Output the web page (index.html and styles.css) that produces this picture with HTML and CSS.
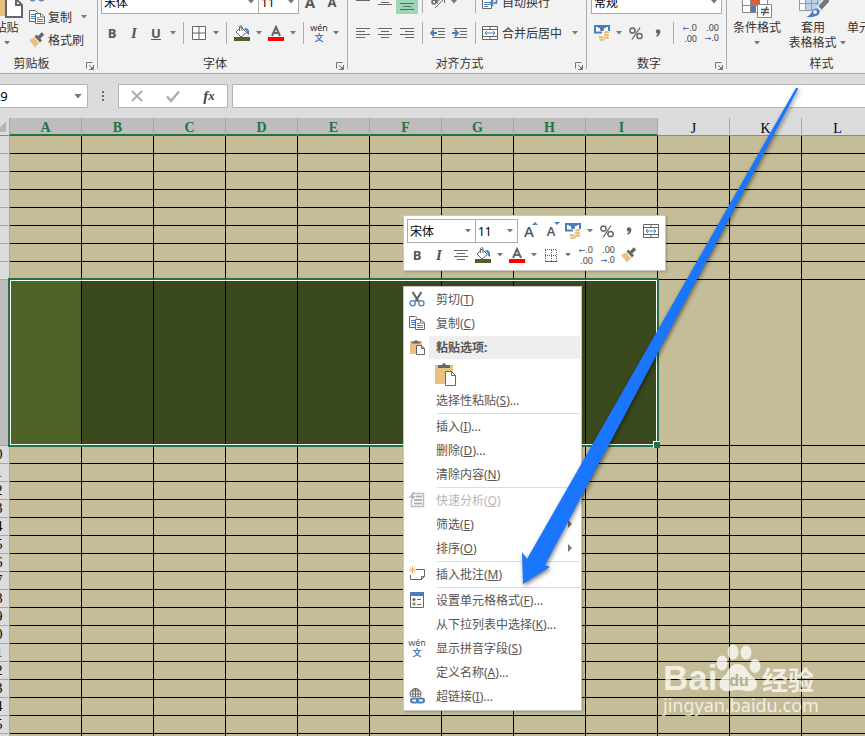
FILE: index.html
```html
<!DOCTYPE html>
<html lang="zh-CN">
<head>
    <meta charset="UTF-8">
    <meta name="viewport" content="width=device-width, initial-scale=1.0">
    <title>工作表</title>
    <link rel="stylesheet" href="styles.css">
</head>
<body>
    <svg class="symbols" aria-hidden="true">
        <symbol id="arrow" viewBox="0 0 6 4"><path d="M0 0h6L3 3.5z" fill="#777"/></symbol>
        <symbol id="cut" viewBox="0 0 16 16">
            <path d="M3.6 1l6 9.5M12.4 1l-6 9.5" stroke="#666" stroke-width="2.2" fill="none"/>
            <circle cx="3.6" cy="12.2" r="2.6" fill="none" stroke="#4a7ebb" stroke-width="1.3"/>
            <circle cx="12.4" cy="12.2" r="2.6" fill="none" stroke="#4a7ebb" stroke-width="1.3"/>
        </symbol>
        <symbol id="copy" viewBox="0 0 16 16">
            <path d="M.5 1.5h6l2 2v9h-8z" fill="#fff" stroke="#666"/>
            <path d="M2 5.5h4M2 7.5h4M2 9.5h4" stroke="#4a7ebb"/>
            <path d="M6.500 4.500h5.500l3.500 3.500v6.500h-9z" fill="#fff" stroke="#666"/>
            <path d="M11.500 4.500v3.500h4" fill="none" stroke="#666"/>
            <path d="M8 8.500h2.500M8 10.500h6M8 12.500h6" stroke="#4a7ebb"/>
        </symbol>
        <symbol id="brush" viewBox="0 0 16 16">
            <path d="M0 8l5-2.500 5 5.500-4 4.500z" fill="#e9c080"/>
            <path d="M5.500 4.500l2-2 5.500 6-2 2z" fill="#666"/>
            <path d="M10 5.500l4-4" stroke="#666" stroke-width="3.400"/>
        </symbol>
        <symbol id="paste" viewBox="0 0 16 16">
            <path d="M1 2h12v13H1z" fill="#e9c080"/>
            <path d="M3 4.500V2.500h2.500Q7-.5 8.500 2.500H11v2z" fill="#666"/>
            <path d="M7.500 6.500h5l3 3v6h-8z" fill="#fff" stroke="#666"/>
            <path d="M12.500 6.500v3h3" fill="none" stroke="#666"/>
        </symbol>
        <symbol id="clip" viewBox="0 0 24 24">
            <path d="M1 3h18v19H1z" fill="#e9c080"/>
            <path d="M4 6V3h4q2-4 4 0h4v3z" fill="#666"/>
            <path d="M11.500 9.500h6l4 4v10h-10z" fill="#fff" stroke="#666"/>
            <path d="M17.500 9.500v4h4" fill="none" stroke="#666"/>
        </symbol>
        <symbol id="borders" viewBox="0 0 16 16">
            <path d="M1.500 1.500h13v13h-13zM8 1.500v13M1.500 8h13" fill="#fff" stroke="#666"/>
        </symbol>
        <symbol id="dotted" viewBox="0 0 16 16">
            <path d="M2 2.500h12M2 8.500h12M2.500 3v11M8.500 3v11M13.500 3v11" fill="none" stroke="#666" stroke-dasharray="1 1"/>
            <path d="M2 14.500h12" stroke="#666"/>
        </symbol>
        <symbol id="bucket" viewBox="0 0 16 16">
            <path d="M11 3q5 0 4 7l-2-1.500q0-4-3-4z" fill="#4a7ebb"/>
            <path d="M7 2l5.500 5.500L7 12 2 7z" fill="#fff" stroke="#666"/>
            <path d="M5.500 6V1.500q1.500-2 2.500 0V6" fill="none" stroke="#666"/>
            <path d="M0 12h16v4H0z" fill="#4f6228"/>
        </symbol>
        <symbol id="fontcolor" viewBox="0 0 16 16">
            <path d="M4 11L8 2l4 9M5.500 8h5" fill="none" stroke="#666" stroke-width="2"/>
            <path d="M0 12h16v4H0z" fill="#f00"/>
        </symbol>
        <symbol id="left" viewBox="0 0 16 16"><path d="M1 3.500h14M1 6.500h9M1 9.500h14M1 12.500h9" stroke="#666"/></symbol>
        <symbol id="center" viewBox="0 0 16 16"><path d="M1 3.500h14M4 6.500h8M1 9.500h14M4 12.500h8" stroke="#666"/></symbol>
        <symbol id="right" viewBox="0 0 16 16"><path d="M1 3.500h14M6 6.500h9M1 9.500h14M6 12.500h9" stroke="#666"/></symbol>
        <symbol id="top" viewBox="0 0 16 16"><path d="M1 .5h14M4 3.500h8M1 6.500h14" stroke="#666"/></symbol>
        <symbol id="middle" viewBox="0 0 16 16"><path d="M1 5.500h14M4 8.500h8M1 10.500h14" stroke="#666"/></symbol>
        <symbol id="bottom" viewBox="0 0 16 16"><path d="M1 9.500h14M4 12.500h8M1 15.500h14" stroke="#666"/></symbol>
        <symbol id="outdent" viewBox="0 0 16 16">
            <path d="M2 3.500h13M8 6.500h7M8 9.500h7M2 12.500h13" stroke="#666"/>
            <path d="M7 8H1M4 5L1 8l3 3" fill="none" stroke="#4a7ebb" stroke-width="1.800"/>
        </symbol>
        <symbol id="indent" viewBox="0 0 16 16">
            <path d="M2 3.500h13M8 6.500h7M8 9.500h7M2 12.500h13" stroke="#666"/>
            <path d="M0 8h6M3 5l3 3-3 3" fill="none" stroke="#4a7ebb" stroke-width="1.800"/>
        </symbol>
        <symbol id="orient" viewBox="0 0 16 16">
            <path d="M5 14L14 5M10 4.500h4.500V9" fill="none" stroke="#666"/>
            <circle cx="4" cy="8" r="2" fill="none" stroke="#666" stroke-width="1.500"/>
            <circle cx="8" cy="4" r="2" fill="none" stroke="#666" stroke-width="1.500"/>
            <path d="M5 5l3 4M8 1l2 4" stroke="#666" stroke-width="1.500"/>
        </symbol>
        <symbol id="wrap" viewBox="0 0 16 16">
            <path d="M.5 3.500h9v11h-9z" fill="#fff" stroke="#666"/>
            <path d="M2 8.500h6M2 10.500h6M2 12.500h4" stroke="#4a7ebb"/>
            <path d="M14.500 3v6H8.500M11 6L8.500 9l2.500 3" fill="none" stroke="#4a7ebb" stroke-width="1.600"/>
        </symbol>
        <symbol id="merge" viewBox="0 0 16 16">
            <path d="M.5 1.500h15v13H.5zM.5 4.500h15M.5 11.500h15M8 1.500v3M8 11.500v3" fill="#fff" stroke="#666"/>
            <path d="M3 8h10M5 6L3 8l2 2M11 6l2 2-2 2" fill="none" stroke="#4a7ebb"/>
        </symbol>
        <symbol id="money" viewBox="0 0 16 16">
            <path d="M0 0h16v8.500H0z" fill="#4a7ebb"/>
            <path d="M2 2h2v1h8V2h2v4.500H2z" fill="#fff"/>
            <circle cx="8" cy="4" r="2.200" fill="#4a7ebb"/>
            <path d="M8 6h8v10H3v-4h5z" fill="#fff"/>
            <ellipse cx="12.500" cy="7.200" rx="3" ry="1.200" fill="#e9c080"/>
            <ellipse cx="12.500" cy="10" rx="3" ry="1.200" fill="#e9c080"/>
            <ellipse cx="12.500" cy="12.800" rx="3" ry="1.200" fill="#e9c080"/>
            <ellipse cx="7" cy="12.200" rx="3" ry="1.200" fill="#e9c080"/>
            <ellipse cx="8" cy="14.800" rx="3" ry="1.200" fill="#e9c080"/>
        </symbol>
        <symbol id="percent" viewBox="0 0 16 16">
            <circle cx="4.500" cy="5.500" r="2.600" fill="none" stroke="#666" stroke-width="1.500"/>
            <circle cx="11.500" cy="11" r="2.600" fill="none" stroke="#666" stroke-width="1.500"/>
            <path d="M12 2.500l-8 12" stroke="#666" stroke-width="1.300"/>
        </symbol>
        <symbol id="comma" viewBox="0 0 16 16">
            <circle cx="8" cy="6.500" r="2.200" fill="#666"/>
            <path d="M9.500 6q.3 3.500-3 5" fill="none" stroke="#666" stroke-width="1.600"/>
        </symbol>
        <symbol id="launcher" viewBox="0 0 8 8">
            <path d="M.5 6.500v-6h6M3 3l3.500 3.500M7.500 3v4.500H3" fill="none" stroke="#777"/>
            <path d="M7.500 4v3.500H4z" fill="#777"/>
        </symbol>
        <symbol id="analyse" viewBox="0 0 16 16">
            <path d="M5.500 1.500h9v13h-12V9" fill="#fff" stroke="#bbb" stroke-width="1.500"/>
            <path d="M4 0L0 6h3L1 10l6-6H4l2-4z" fill="#b5b5b5"/>
            <path d="M7 4.500h6M5 8h8M5 11.500h8" stroke="#b0b0b0" stroke-width="2"/>
        </symbol>
        <symbol id="comment" viewBox="0 0 16 16">
            <path d="M7 3.500h8.500v7l-3 3H1.500V9" fill="#fff" stroke="#666"/>
            <path d="M15.500 10.500h-3v3" fill="none" stroke="#666"/>
            <path d="M3.500 0v8M0 4h7M1 1.500l5 5M6 1.500l-5 5" stroke="#e9b866"/>
        </symbol>
        <symbol id="format" viewBox="0 0 16 16">
            <path d="M1.500 1.500h13v14h-13z" fill="#fff" stroke="#666"/>
            <path d="M1 0h14v4H1z" fill="#4a7ebb"/>
            <path d="M8 7.500h4M8 12.500h4" stroke="#666"/>
            <circle cx="5" cy="7.500" r="1.500" fill="#666"/>
            <circle cx="5" cy="12" r="1.200" fill="none" stroke="#666"/>
        </symbol>
        <symbol id="link" viewBox="0 0 16 16">
            <circle cx="6.500" cy="6" r="5.500" fill="#fff" stroke="#666"/>
            <path d="M6.500.5v10M1 6h11M2 3h9M2 9h9" stroke="#666"/>
            <ellipse cx="6.500" cy="6" rx="2.800" ry="5.500" fill="none" stroke="#666"/>
            <path d="M1 9h15v7H1z" fill="#fff"/>
            <rect x="2" y="10.500" width="7" height="4" rx="2" fill="none" stroke="#4a7ebb" stroke-width="2"/>
            <rect x="8" y="10.500" width="7" height="4" rx="2" fill="none" stroke="#4a7ebb" stroke-width="2"/>
        </symbol>
        <symbol id="cross" viewBox="0 0 16 16"><path d="M3 3l10 10M13 3L3 13" stroke="#aaa" stroke-width="1.800"/></symbol>
        <symbol id="check" viewBox="0 0 16 16"><path d="M2 8.500l4 4.500 8-9.500" fill="none" stroke="#aaa" stroke-width="2.400"/></symbol>
        <symbol id="more" viewBox="0 0 2 12"><path d="M0 0h2v2H0zM0 4h2v2H0zM0 8h2v2H0z" fill="#666"/></symbol>
        <symbol id="condition" viewBox="0 0 32 32">
            <path d="M1.500 5.500h25v21h-25zM1.500 12.500h25M1.500 19.500h25M9.500 5.500v21M17.500 5.500v21" fill="#fff" stroke="#888"/>
            <path d="M10 6h7v6h-7zM10 13h9v6h-9z" fill="#d9603b"/>
            <path d="M10 20h5v6h-5z" fill="#4a7ebb"/>
            <path d="M16.500 18.500h14v13h-14z" fill="#fff" stroke="#888"/>
            <path d="M20 23.500h8M20 26.500h8M26 20.500l-4 9" stroke="#555" stroke-width="1.300"/>
        </symbol>
        <symbol id="tablestyle" viewBox="0 0 32 32">
            <path d="M2.500 3.500h23v21h-23z" fill="#fff"/>
            <path d="M9 10h17v14H9z" fill="#bdd0ea"/>
            <path d="M2.500 3.500h23v21h-23zM2.500 10.500h23M2.500 17.500h23M8.500 3.500v21M14.500 3.500v21M20.500 3.500v21" fill="none" stroke="#999"/>
            <path d="M31 13l-9 10" stroke="#fff" stroke-width="7"/>
            <path d="M31 13l-8 9" stroke="#777" stroke-width="5"/>
            <path d="M9 31q5-2 6-6 3-4 7-1 2 4-3 6-5 2-10 1z" fill="#4a7ebb"/>
            <circle cx="18" cy="26" r="2" fill="#e4edf8"/>
        </symbol>
    </svg>

    <header class="ribbon">
        <section class="group clipboard">
            <div class="tools">
                <button class="big paste"><svg class="i32"><use href="#paste"/></svg><span>粘贴</span><svg class="down"><use href="#arrow"/></svg></button>
                <div class="stack">
                    <button class="line" aria-label="剪切"><svg class="i16"><use href="#cut"/></svg></button>
                    <button class="line"><svg class="i16"><use href="#copy"/></svg>复制<svg class="down"><use href="#arrow"/></svg></button>
                    <button class="line"><svg class="i16"><use href="#brush"/></svg>格式刷</button>
                </div>
            </div>
            <footer><span>剪贴板</span><button class="launch" aria-label="剪贴板选项"><svg><use href="#launcher"/></svg></button></footer>
        </section>

        <section class="group font">
            <div class="row">
                <select class="box face" aria-label="字体"><option>宋体</option></select>
                <select class="box size" aria-label="字号"><option>11</option></select>
                <button class="tool letter grow">A</button>
                <button class="tool letter">A</button>
            </div>
            <div class="row">
                <button class="tool letter">B</button>
                <button class="tool letter italic">I</button>
                <button class="tool letter under">U</button>
                <button class="drop" aria-label="下划线"><svg class="down"><use href="#arrow"/></svg></button>
                <i class="sep"></i>
                <button class="tool" aria-label="边框"><svg class="i16"><use href="#borders"/></svg></button>
                <button class="drop" aria-label="更多边框"><svg class="down"><use href="#arrow"/></svg></button>
                <i class="sep"></i>
                <button class="tool" aria-label="填充颜色"><svg class="i16"><use href="#bucket"/></svg></button>
                <button class="drop" aria-label="更多填充颜色"><svg class="down"><use href="#arrow"/></svg></button>
                <button class="tool" aria-label="字体颜色"><svg class="i16"><use href="#fontcolor"/></svg></button>
                <button class="drop" aria-label="更多字体颜色"><svg class="down"><use href="#arrow"/></svg></button>
                <i class="sep"></i>
                <button class="tool pinyin"><span>wén</span><b>文</b></button>
                <button class="drop" aria-label="更多拼音"><svg class="down"><use href="#arrow"/></svg></button>
            </div>
            <footer><span>字体</span><button class="launch" aria-label="字体选项"><svg><use href="#launcher"/></svg></button></footer>
        </section>

        <section class="group align">
            <div class="row">
                <button class="tool" aria-label="顶端对齐"><svg class="i16"><use href="#top"/></svg></button>
                <button class="tool" aria-label="垂直居中"><svg class="i16"><use href="#middle"/></svg></button>
                <button class="tool on" aria-label="底端对齐"><svg class="i16"><use href="#bottom"/></svg></button>
                <i class="sep"></i>
                <button class="tool" aria-label="方向"><svg class="i16"><use href="#orient"/></svg></button>
                <button class="drop wide" aria-label="更多方向"><svg class="down"><use href="#arrow"/></svg></button>
                <i class="sep"></i>
                <button class="line"><svg class="i16"><use href="#wrap"/></svg>自动换行</button>
            </div>
            <div class="row">
                <button class="tool" aria-label="左对齐"><svg class="i16"><use href="#left"/></svg></button>
                <button class="tool" aria-label="居中"><svg class="i16"><use href="#center"/></svg></button>
                <button class="tool" aria-label="右对齐"><svg class="i16"><use href="#right"/></svg></button>
                <i class="sep"></i>
                <button class="tool" aria-label="减少缩进"><svg class="i16"><use href="#outdent"/></svg></button>
                <button class="tool" aria-label="增加缩进"><svg class="i16"><use href="#indent"/></svg></button>
                <i class="sep"></i>
                <button class="line"><svg class="i16"><use href="#merge"/></svg>合并后居中<svg class="down"><use href="#arrow"/></svg></button>
            </div>
            <footer><span>对齐方式</span><button class="launch" aria-label="对齐选项"><svg><use href="#launcher"/></svg></button></footer>
        </section>

        <section class="group number">
            <div class="row">
                <select class="box kind" aria-label="数字格式"><option>常规</option></select>
            </div>
            <div class="row">
                <button class="tool" aria-label="会计数字格式"><svg class="i16"><use href="#money"/></svg></button>
                <button class="drop" aria-label="更多货币"><svg class="down"><use href="#arrow"/></svg></button>
                <button class="tool" aria-label="百分比"><svg class="i16"><use href="#percent"/></svg></button>
                <button class="tool" aria-label="千位分隔"><svg class="i16"><use href="#comma"/></svg></button>
                <i class="sep"></i>
                <button class="tool digits"><span><b>←</b>.0</span><span>.00</span></button>
                <button class="tool digits"><span>.00</span><span><b>→</b>.0</span></button>
            </div>
            <footer><span>数字</span><button class="launch" aria-label="数字选项"><svg><use href="#launcher"/></svg></button></footer>
        </section>

        <section class="group look">
            <div class="tools">
                <button class="big"><svg class="i32"><use href="#condition"/></svg><span>条件格式</span><svg class="down"><use href="#arrow"/></svg></button>
                <button class="big"><svg class="i32"><use href="#tablestyle"/></svg><span>套用</span><span class="more">表格格式<svg class="down"><use href="#arrow"/></svg></span></button>
                <button class="big"><svg class="i32"></svg><span>单元格样式</span></button>
            </div>
            <footer><span>样式</span></footer>
        </section>
    </header>

    <div class="formula">
        <div class="name">
            <input type="text" value="A9" aria-label="名称框">
            <svg class="down"><use href="#arrow"/></svg>
        </div>
        <svg class="dots"><use href="#more"/></svg>
        <div class="edit">
            <button aria-label="取消"><svg class="i16"><use href="#cross"/></svg></button>
            <button aria-label="输入"><svg class="i16"><use href="#check"/></svg></button>
            <button class="fx">f<small>x</small></button>
        </div>
        <input class="value" type="text" aria-label="编辑栏">
    </div>

    <main class="sheet">
        <table>
            <colgroup><col class="rowhead"></colgroup>
            <thead><tr id="head"></tr></thead>
            <tbody id="rows"></tbody>
        </table>
    </main>

    <div class="minibar">
        <div class="row">
            <select class="box face" aria-label="字体"><option>宋体</option></select>
            <select class="box size" aria-label="字号"><option>11</option></select>
            <button class="tool letter step up">A</button>
            <button class="tool letter step">A</button>
            <button class="tool" aria-label="会计数字格式"><svg class="i16"><use href="#money"/></svg></button>
            <button class="drop" aria-label="更多货币"><svg class="down"><use href="#arrow"/></svg></button>
            <button class="tool" aria-label="百分比"><svg class="i16"><use href="#percent"/></svg></button>
            <button class="tool" aria-label="千位分隔"><svg class="i16"><use href="#comma"/></svg></button>
            <button class="tool" aria-label="合并后居中"><svg class="i16"><use href="#merge"/></svg></button>
        </div>
        <div class="row">
            <button class="tool letter">B</button>
            <button class="tool letter italic">I</button>
            <button class="tool" aria-label="居中"><svg class="i16"><use href="#center"/></svg></button>
            <button class="tool" aria-label="填充颜色"><svg class="i16"><use href="#bucket"/></svg></button>
            <button class="drop" aria-label="更多填充颜色"><svg class="down"><use href="#arrow"/></svg></button>
            <button class="tool" aria-label="字体颜色"><svg class="i16"><use href="#fontcolor"/></svg></button>
            <button class="drop" aria-label="更多字体颜色"><svg class="down"><use href="#arrow"/></svg></button>
            <button class="tool" aria-label="边框"><svg class="i16"><use href="#dotted"/></svg></button>
            <button class="drop" aria-label="更多边框"><svg class="down"><use href="#arrow"/></svg></button>
            <button class="tool digits"><span><b>←</b>.0</span><span>.00</span></button>
            <button class="tool digits"><span>.00</span><span><b>→</b>.0</span></button>
            <button class="tool" aria-label="格式刷"><svg class="i16"><use href="#brush"/></svg></button>
        </div>
    </div>

    <nav class="menu">
        <button><svg class="i16"><use href="#cut"/></svg><span>剪切(<u>T</u>)</span></button>
        <button><svg class="i16"><use href="#copy"/></svg><span>复制(<u>C</u>)</span></button>
        <div class="title"><svg class="i16"><use href="#paste"/></svg><span>粘贴选项:</span></div>
        <button class="option" aria-label="粘贴"><svg class="i24"><use href="#clip"/></svg></button>
        <button><span>选择性粘贴(<u>S</u>)...</span></button>
        <hr>
        <button><span>插入(<u>I</u>)...</span></button>
        <button><span>删除(<u>D</u>)...</span></button>
        <button><span>清除内容(<u>N</u>)</span></button>
        <hr>
        <button disabled><svg class="i16"><use href="#analyse"/></svg><span>快速分析(<u>Q</u>)</span></button>
        <button class="sub"><span>筛选(<u>E</u>)</span></button>
        <button class="sub"><span>排序(<u>O</u>)</span></button>
        <hr>
        <button><svg class="i16"><use href="#comment"/></svg><span>插入批注(<u>M</u>)</span></button>
        <hr>
        <button><svg class="i16"><use href="#format"/></svg><span>设置单元格格式(<u>F</u>)...</span></button>
        <button><span>从下拉列表中选择(<u>K</u>)...</span></button>
        <button><span class="pinyin"><span>wén</span><b>文</b></span><span>显示拼音字段(<u>S</u>)</span></button>
        <button><span>定义名称(<u>A</u>)...</span></button>
        <button><svg class="i16"><use href="#link"/></svg><span>超链接(<u>I</u>)...</span></button>
    </nav>

    <div class="watermark">
        <div class="logo">
            <span class="bai">Bai</span>
            <span class="paw">
                <svg viewBox="0 0 46 50">
                    <ellipse cx="6" cy="20" rx="5.500" ry="7.500"/>
                    <ellipse cx="17" cy="9" rx="5.500" ry="7.500"/>
                    <ellipse cx="30" cy="9.500" rx="5.500" ry="7"/>
                    <ellipse cx="39" cy="23" rx="5.500" ry="7"/>
                    <path d="M22 21q6 0 9 6 3 5 7 8 5 5 2 10-3 4-10 3-8-2-16 0-8 1-10-4-2-6 3-10 4-3 6-8 3-5 9-5z"/>
                </svg>
                <b>du</b>
            </span>
            <span class="jy">经验</span>
        </div>
        <div class="site">jingyan.baidu.com</div>
    </div>

    <svg class="pointer" width="300" height="510" viewBox="0 0 300 510" aria-hidden="true">
        <path d="M275 8q2-1 2 1L24 485l5 2-27 17-1-32 5 7z"/>
    </svg>

    <script>
        var columns = 'ABCDEFGHIJKL'.split('');
        var selectedRow = 9;
        var lastSelected = columns.indexOf('I');

        var head = '<th class="corner"></th>';
        columns.forEach(function (name, i) {
            head += '<th scope="col"' + (i <= lastSelected ? ' class="picked"' : '') + '>' + name + '</th>';
        });
        document.getElementById('head').innerHTML = head;

        var html = '';
        for (var r = 1; r <= 26; r++) {
            html += r === selectedRow ? '<tr class="current">' : '<tr>';
            html += '<th scope="row">' + r + '</th>';
            columns.forEach(function (name, i) {
                var picked = r === selectedRow && i <= lastSelected;
                html += picked ? '<td class="picked">' : '<td>';
                if (r === selectedRow && i === 0) {
                    html += '<div class="selection"></div>';
                }
                html += '</td>';
            });
            html += '</tr>';
        }
        document.getElementById('rows').innerHTML = html;
    </script>
</body>
</html>
```
FILE: styles.css
```css
* {
    box-sizing: border-box;
}

body {
    position: relative;
    margin: 0;
    height: 100vh;
    overflow: hidden;
    background-color: #dcdcdc;
    color: #333;
    font-family: "Noto Sans", "Noto Sans CJK SC", sans-serif;
    font-size: 12px;
}

button {
    display: flex;
    align-items: center;
    justify-content: center;
    flex: none;
    padding: 0;
    border: none;
    background: none;
    color: inherit;
    font: inherit;
    white-space: nowrap;
}

svg {
    flex: none;
}

.symbols {
    display: none;
}

.i16 {
    width: 16px;
    height: 16px;
}

.i24 {
    width: 24px;
    height: 24px;
}

.i32 {
    width: 32px;
    height: 32px;
}

.down {
    width: 6px;
    height: 4px;
}

/* ribbon, scrolled partly out of view */
.ribbon {
    display: flex;
    height: 94px;
    margin-top: -20px;
    margin-left: -19px;
    background-color: #f2f2f2;
    border-bottom: 1px solid #ababab;
}

.group {
    position: relative;
    display: flex;
    flex-direction: column;
    flex: none;
    gap: 8px;
    padding: 10px 4px 0;
}

.group::after {
    content: "";
    position: absolute;
    top: 0;
    right: 0;
    bottom: 4px;
    border-right: 1px solid #ababab;
}

.clipboard {
    width: 117px;
}

.font {
    width: 250px;
}

.align {
    width: 239px;
}

.number {
    width: 140px;
}

.group.look {
    width: 189px;
    padding-left: 2px;
}

.row,
.tools {
    display: flex;
    align-items: center;
}

.row {
    height: 22px;
}

.row:first-child {
    height: 24px;
}

.font .row {
    margin-left: -1px;
}

.tools {
    align-items: flex-start;
    height: 54px;
}

.group footer {
    display: flex;
    position: absolute;
    left: 0;
    right: 0;
    bottom: 0;
    line-height: 18px;
}

.group footer span {
    flex: 1;
    text-align: center;
}

.launch {
    width: 16px;
    padding-top: 3px;
}

.launch svg {
    width: 8px;
    height: 8px;
}

.clipboard .tools {
    margin-top: -8px;
    height: 62px;
}

.clipboard .line {
    padding-left: 1px;
    gap: 3px;
}

.big {
    flex-direction: column;
    justify-content: flex-start;
    line-height: 15px;
    width: 56px;
}

.big .i32 {
    margin-bottom: 2px;
}

.big .down {
    margin-top: 6px;
}

.big.paste {
    width: 43px;
    margin-top: 4px;
}

.look .tools {
    margin-top: -4px;
}

.look .big:last-child {
    width: 72px;
}

.more {
    display: flex;
    gap: 3px;
    padding-left: 8px;
}

.line {
    gap: 4px;
    height: 23px;
    padding-left: 2px;
}

.line .down {
    margin-left: 6px;
}

.sep {
    width: 1px;
    height: 22px;
    margin: 0 4px;
    background-color: #ababab;
}

.tool {
    width: 22px;
    height: 22px;
}

.tool.on {
    height: 24px;
    background-color: #9fd5b7;
}

.drop {
    width: 12px;
    height: 22px;
}

.drop.wide {
    width: 22px;
    justify-content: flex-start;
    padding-left: 2px;
}

.letter {
    color: #555;
    font-family: "Open Sans", sans-serif;
    font-size: 13px;
    font-weight: bold;
}

.letter.grow {
    font-size: 15px;
}

.italic {
    font-family: "Liberation Serif", serif;
    font-size: 15px;
    font-style: italic;
}

.under {
    text-decoration: underline;
}

.box {
    flex: none;
    height: 24px;
    padding: 0 2px;
    border: 1px solid #ababab;
    border-radius: 0;
    appearance: none;
    background: #fff url("data:image/svg+xml,%3Csvg xmlns='http://www.w3.org/2000/svg' width='6' height='4'%3E%3Cpath d='M0 0h6L3 3.500z' fill='%23777'/%3E%3C/svg%3E") no-repeat right 4px center;
    color: #000;
    font: inherit;
}

.face {
    width: 158px;
}

.size {
    width: 41px;
    margin-left: -1px;
}

.kind {
    width: 131px;
}

.pinyin {
    display: flex;
    flex: none;
    flex-direction: column;
    align-items: center;
    justify-content: center;
    width: 16px;
    font-size: 9px;
    line-height: 10px;
}

.tool.pinyin {
    width: 22px;
}

.pinyin b {
    color: #4a7ebb;
}

.digits {
    flex-direction: column;
    align-items: flex-end;
    padding-right: 3px;
    font-size: 9px;
    line-height: 10px;
    color: #444;
}

.digits b {
    color: #4a7ebb;
    font-family: "DejaVu Sans", sans-serif;
    font-size: 8px;
}

/* formula bar */
.formula {
    display: flex;
    gap: 4px;
    padding: 10px 0;
    height: 44px;
}

.name {
    display: flex;
    align-items: center;
    width: 98px;
    height: 24px;
    margin-left: -10px;
    padding-right: 5px;
    background-color: #fff;
    border: 1px solid #b5b5b5;
}

.name input {
    flex: 1;
    min-width: 0;
    padding: 0 0 0 1px;
    border: none;
    color: #000;
    font: inherit;
    font-size: 13px;
}

.name .down {
    width: 8px;
    height: 5px;
}

.dots {
    width: 22px;
    height: 12px;
    margin-top: 7px;
}

.edit {
    display: flex;
    width: 110px;
    height: 24px;
    background-color: #fff;
    border: 1px solid #b5b5b5;
}

.edit button {
    flex: 1;
}

.edit .fx {
    color: #444;
    font-family: "Liberation Serif", serif;
    font-size: 15px;
    font-style: italic;
    font-weight: bold;
}

.fx small {
    font-size: 13px;
}

.value {
    flex: 1;
    min-width: 0;
    height: 24px;
    border: 1px solid #b5b5b5;
    border-right: none;
}

/* sheet */
.sheet {
    margin-left: -17px;
    background-color: #dcdcdc;
}

.sheet table {
    width: 891px;
    border-spacing: 0;
    table-layout: fixed;
}

.rowhead {
    width: 27px;
}

.sheet th {
    height: 18px;
    padding: 0;
    border-right: 1px solid #a6a6a6;
    border-bottom: 1px solid #a6a6a6;
    color: #000;
    font-family: "Liberation Serif", serif;
    font-size: 14px;
    font-weight: normal;
    line-height: 16px;
}

.sheet thead th {
    padding-top: 3px;
    border-bottom-color: #888;
    line-height: 13px;
}

.sheet thead .picked {
    background-color: #bdbdbd;
    border-bottom: 2px solid #217346;
    color: #217346;
    font-weight: bold;
}

.sheet .corner {
    background: linear-gradient(135deg, transparent 50%, #b5b5b5 50%) no-repeat right 3px bottom 3px / 10px 10px;
}

.sheet tbody th {
    padding-right: 1px;
}

.sheet td {
    height: 18px;
    padding: 0;
    background-color: #c4bd97;
    border-right: 1px solid #000;
    border-bottom: 1px solid #000;
}

.current th {
    background-color: #bdbdbd;
}

.sheet .current td {
    height: 166px;
}

.sheet .current .picked {
    position: relative;
    background-color: #3b4a1e;
}

.sheet .current .picked:nth-child(2) {
    z-index: 1;
    background-color: #4f6228;
}

.selection {
    position: absolute;
    top: -2px;
    left: -2px;
    width: 651px;
    height: 169px;
    border: 2px solid #217346;
    outline: 1px solid #fff;
    outline-offset: -3px;
}

.selection::after {
    content: "";
    position: absolute;
    right: -3px;
    bottom: -3px;
    width: 6px;
    height: 6px;
    background-color: #217346;
    border-top: 1px solid #fff;
    border-left: 1px solid #fff;
}

/* floating toolbar and right-click menu */
.minibar,
.menu {
    position: absolute;
    z-index: 2;
    left: 403px;
    background-color: #fff;
    border: 1px solid #c6c6c6;
    box-shadow: 1px 1px 2px rgba(0, 0, 0, 0.2);
}

.minibar {
    top: 215px;
    width: 263px;
    height: 56px;
    padding: 3px 2px;
}

.minibar .row {
    height: 24px;
}

.minibar .face {
    width: 69px;
    margin-left: 1px;
}

.minibar .size {
    width: 43px;
}

.minibar .step {
    position: relative;
    font-size: 13px;
    font-weight: 600;
}

.minibar .up {
    font-size: 15px;
}

.step::after {
    content: "";
    position: absolute;
    top: 2px;
    right: 2px;
    border: 3px solid transparent;
    border-top-color: #4a7ebb;
    border-bottom: none;
}

.step.up::after {
    border-top: none;
    border-bottom: 3px solid #4a7ebb;
}

.menu {
    top: 286px;
    width: 179px;
    padding: 1px 1px 1px 0;
    color: #555;
}

.menu button,
.title {
    display: flex;
    align-items: center;
    justify-content: flex-start;
    width: 100%;
    height: 24px;
    padding: 0 0 2px 5px;
    gap: 11px;
}

.menu button > span:only-child {
    padding-left: 27px;
}

.menu button:disabled {
    color: #b5b5b5;
}

.menu .title {
    gap: 4px;
    font-weight: bold;
}

.title span {
    flex: 1;
    padding-left: 7px;
    background-color: #eee;
    line-height: 23px;
}

.menu .option {
    height: 29px;
    padding-left: 30px;
}

.menu hr {
    height: 1px;
    margin: 0 0 1px 33px;
    border: none;
    background-color: #ddd;
}

.menu .sub {
    justify-content: space-between;
    padding-right: 8px;
}

.menu .sub span {
    padding-left: 27px;
}

.sub::after {
    content: "";
    border: 4px solid transparent;
    border-left: 4px solid #777;
    border-right: none;
}

/* site mark */
.watermark {
    position: absolute;
    left: 663px;
    top: 643px;
    color: rgba(255, 255, 255, 0.75);
    white-space: nowrap;
}

.logo {
    display: flex;
    align-items: flex-end;
    height: 50px;
}

.bai {
    width: 53px;
    font-family: "Liberation Sans", sans-serif;
    font-size: 35px;
    font-weight: bold;
    line-height: 30px;
}

.paw {
    position: relative;
    width: 46px;
}

.paw svg {
    display: block;
    width: 46px;
    height: 50px;
    fill: rgba(255, 255, 255, 0.75);
}

.paw b {
    position: absolute;
    left: 0;
    right: 0;
    bottom: 3px;
    color: #b5ae8b;
    font-family: "Liberation Sans", sans-serif;
    font-size: 16px;
    line-height: 18px;
    text-align: center;
}

.jy {
    font-family: "Noto Sans CJK SC", sans-serif;
    font-size: 26px;
    font-weight: bold;
    line-height: 28px;
}

.site {
    padding-top: 1px;
    font-size: 18px;
    line-height: 22px;
}

.pointer {
    position: absolute;
    z-index: 3;
    left: 521px;
    top: 80px;
    fill: #1a75ff;
    filter: drop-shadow(1px 2px 2px rgba(0, 0, 0, 0.5));
    pointer-events: none;
}
```
